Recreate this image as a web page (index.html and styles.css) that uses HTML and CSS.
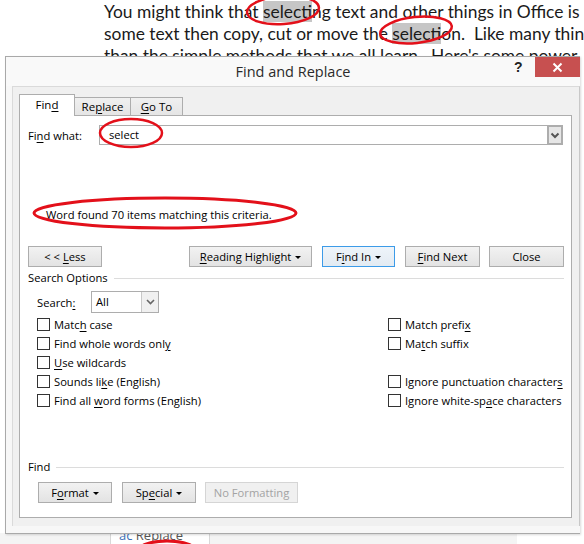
FILE: index.html
```html
<!DOCTYPE html>
<html>
<head>
<meta charset="utf-8">
<title>Find and Replace</title>
<link rel="stylesheet" href="styles.css">
</head>
<body>
<div class="doc">
  <div class="line">You might think that <span class="hl">select</span>ing text and other things in Office is simple</div>
  <div class="line">some text then copy, cut or move the <span class="hl">select</span>ion.&nbsp; Like many things</div>
  <div class="line">than the simple methods that we all learn.&nbsp; Here's some power</div>
  <div class="ribbon"><div class="ribbon-btn"><span class="ac">ac</span> Replace</div></div>
</div>

<div class="dialog">
  <div class="titlebar">
    <div class="title">Find and Replace</div>
    <div class="help">?</div>
    <div class="close"><svg width="11" height="11" viewBox="0 0 11 11"><path d="M1.5 1.5 L9.5 9.5 M9.5 1.5 L1.5 9.5" stroke="#fff" stroke-width="2" fill="none"/></svg></div>
  </div>
  <div class="client">
    <div class="tabs">
      <div class="tab active"><span>Fin<u>d</u></span></div>
      <div class="tab replace"><span>Re<u>p</u>lace</span></div>
      <div class="tab goto"><span><u>G</u>o To</span></div>
    </div>
    <div class="panel">
      <div class="findwhat">
        <div class="fw-label">Fi<u>n</u>d what:</div>
        <div class="combo">
          <span class="combo-value">select</span>
          <span class="combo-drop"><svg width="10" height="7" viewBox="0 0 10 7"><path d="M1.5 1.5 L5 5 L8.5 1.5" stroke="#555" stroke-width="2" fill="none"/></svg></span>
        </div>
      </div>

      <div class="message">Word found 70 items matching this criteria.</div>

      <div class="btnrow">
        <div class="btn less"><span>&lt; &lt; <u>L</u>ess</span></div>
        <div class="btn rh"><span><u>R</u>eading Highlight</span><span class="caret"></span></div>
        <div class="btn findin"><span>F<u>i</u>nd In</span><span class="caret"></span></div>
        <div class="btn findnext"><span><u>F</u>ind Next</span></div>
        <div class="btn close-btn"><span>Close</span></div>
      </div>

      <div class="group-title"><span>Search Options</span><span class="rule"></span></div>

      <div class="search-row">
        <div class="search-label">Search<u>:</u></div>
        <div class="select">
          <span class="select-value">All</span>
          <span class="select-drop"><svg width="9" height="6" viewBox="0 0 9 6"><path d="M1 1 L4.5 4.5 L8 1" stroke="#666" stroke-width="1.6" fill="none"/></svg></span>
        </div>
      </div>

      <div class="options">
        <div class="opt"><span class="cb"></span><span>Matc<u>h</u> case</span></div>
        <div class="opt"><span class="cb"></span><span>Match prefi<u>x</u></span></div>
        <div class="opt"><span class="cb"></span><span>Find whole words onl<u>y</u></span></div>
        <div class="opt"><span class="cb"></span><span>Ma<u>t</u>ch suffix</span></div>
        <div class="opt"><span class="cb"></span><span><u>U</u>se wildcards</span></div>
        <div class="opt empty"></div>
        <div class="opt"><span class="cb"></span><span>Sounds li<u>k</u>e (English)</span></div>
        <div class="opt"><span class="cb"></span><span>Ignore punctuation character<u>s</u></span></div>
        <div class="opt"><span class="cb"></span><span>Find all <u>w</u>ord forms (English)</span></div>
        <div class="opt"><span class="cb"></span><span>Ignore white-sp<u>a</u>ce characters</span></div>
      </div>

      <div class="group-title find-title"><span>Find</span><span class="rule"></span></div>

      <div class="btnrow bottom-row">
        <div class="btn format"><span>F<u>o</u>rmat</span><span class="caret"></span></div>
        <div class="btn special"><span>Sp<u>e</u>cial</span><span class="caret"></span></div>
        <div class="btn disabled"><span>No Formatting</span></div>
      </div>
    </div>
  </div>
</div>

<svg class="marks" width="584" height="544" viewBox="0 0 584 544">
  <g fill="none" stroke="#e3101a" stroke-linecap="round">
    <ellipse cx="283" cy="10" rx="36" ry="14" stroke-width="2.5" transform="rotate(-4 283 10)"/>
    <ellipse cx="416" cy="30" rx="36" ry="13" stroke-width="2.5" transform="rotate(-6 416 30)"/>
    <ellipse cx="131" cy="133" rx="31" ry="14" stroke-width="2.5"/>
    <ellipse cx="165" cy="213" rx="131" ry="15" stroke-width="3"/>
    <ellipse cx="167" cy="552" rx="30" ry="11" stroke-width="3"/>
  </g>
</svg>
</body>
</html>
```

FILE: styles.css
```css
* { box-sizing: border-box; }

html, body {
  margin: 0;
  padding: 0;
}

body {
  width: 584px;
  height: 544px;
  overflow: hidden;
  background: #ffffff;
  position: relative;
  font-family: "Open Sans", "Noto Sans", sans-serif;
}

u { text-decoration: underline; text-underline-offset: 2px; }

/* document behind */
.doc {
  height: 544px;
  display: flex;
  flex-direction: column;
  padding-top: 1px;
  font-family: Lato, "Open Sans", sans-serif;
  font-size: 17.4px;
  line-height: 22px;
  color: #1a1a1a;
}

.line {
  padding-left: 104px;
  white-space: nowrap;
}

.hl { background: #c6c6c6; }

.ribbon {
  margin-top: auto;
  height: 11px;
  width: 517px;
  background: #f4f4f4;
  padding-left: 110px;
}

.ribbon-btn {
  width: 100px;
  height: 11px;
  background: #fff;
  border-left: 1px solid #d8d8d8;
  border-right: 1px solid #d8d8d8;
  font-size: 13px;
  line-height: 4px;
  color: #555;
  padding-left: 8px;
  overflow: hidden;
  font-family: "Open Sans", sans-serif;
}

.ac { color: #3c6fb6; }

/* dialog window */
.dialog {
  position: absolute;
  left: 5px;
  top: 56px;
  width: 575px;
  height: 478px;
  background: #f7f7f7;
  border: 1px solid #a9a9a9;
  border-right: none;
  box-shadow: 1px 1px 2px rgba(0,0,0,0.15);
  display: flex;
  flex-direction: column;
  z-index: 2;
}

.titlebar {
  height: 29px;
  display: flex;
  align-items: flex-start;
  background: #f9f9f9;
}

.title {
  flex: 1;
  text-align: center;
  font-size: 14.5px;
  line-height: 30px;
  color: #2a2a2a;
  padding-left: 67px;
}

.help {
  width: 22px;
  font-weight: bold;
  font-size: 14px;
  line-height: 19px;
  color: #222;
  font-family: "Liberation Sans", sans-serif;
  text-align: left;
  padding-left: 1px;
  padding-top: 1px;
}

.close {
  width: 45px;
  height: 20px;
  background: #c75050;
  display: flex;
  align-items: center;
  justify-content: center;
}

.client {
  flex: 1;
  margin-left: 6px;
  margin-bottom: 7px;
  background: #f0f0f0;
  border-top: 1px solid #dadada;
  border-left: 1px solid #dadada;
  border-right: 1px solid #c8c8c8;
  padding: 7px 7px 8px 6px;
  display: flex;
  flex-direction: column;
  font-size: 11.2px;
  color: #000;
}

/* tabs */
.tabs {
  display: flex;
  align-items: flex-end;
  height: 21px;
  position: relative;
  z-index: 1;
}

.tab {
  height: 18px;
  border: 1px solid #adadad;
  border-bottom: none;
  background: linear-gradient(#f0f0f0, #e5e5e5);
  text-align: center;
  line-height: 17px;
  font-size: 11.5px;
}

.tab.active {
  width: 56px;
  height: 22px;
  margin-bottom: -1px;
  background: #fff;
  line-height: 20px;
}

.tab.replace { width: 57px; margin-left: -1px; }
.tab.goto { width: 53px; margin-left: -1px; }

.panel {
  flex: 1;
  background: #fff;
  border: 1px solid #adadad;
  padding: 0 7px 0 8px;
  display: flex;
  flex-direction: column;
}

/* find what */
.findwhat {
  margin-top: 9px;
  display: flex;
  align-items: center;
  height: 20px;
}

.fw-label { width: 71px; }

.combo {
  width: 464px;
  height: 20px;
  border: 1px solid #adadad;
  display: flex;
  align-items: stretch;
}

.combo-value {
  flex: 1;
  padding-left: 9px;
  line-height: 17px;
}

.combo-drop {
  width: 16px;
  margin: -1px -1px -1px 0;
  border: 2px solid #adadad;
  background: #e6e6e6;
  display: flex;
  align-items: center;
  justify-content: center;
}

.message {
  margin-top: 62px;
  line-height: 16px;
  padding-left: 18px;
}

/* buttons */
.btnrow {
  margin-top: 23px;
  display: flex;
  height: 21px;
}

.btn {
  height: 21px;
  border: 1px solid #adadad;
  background: linear-gradient(#f2f2f2, #e3e3e3);
  display: flex;
  align-items: center;
  justify-content: center;
  line-height: 17px;
  white-space: nowrap;
}

.caret {
  display: inline-block;
  width: 0;
  height: 0;
  border-left: 3px solid transparent;
  border-right: 3px solid transparent;
  border-top: 3px solid #000;
  margin-left: 4px;
  margin-top: 1px;
}

.less { width: 74px; }
.rh { width: 123px; margin-left: 87px; }
.findin {
  width: 73px;
  margin-left: 10px;
  border-color: #3c9be8;
  background: linear-gradient(#eef4fa, #e3ebf2);
}
.findnext { width: 75px; margin-left: 10px; }
.close-btn { width: 75px; margin-left: 9px; }

/* group titles */
.group-title {
  margin-top: 3px;
  display: flex;
  align-items: center;
  line-height: 16px;
  height: 16px;
}

.group-title .rule {
  flex: 1;
  height: 1px;
  background: #dcdcdc;
  margin-left: 6px;
}

.find-title { margin-top: 49px; }

/* search select */
.search-row {
  margin-top: 5px;
  display: flex;
  align-items: center;
  padding-left: 9px;
  height: 22px;
}

.search-label { width: 54px; }

.select {
  width: 68px;
  height: 22px;
  border: 1px solid #adadad;
  display: flex;
}

.select-value {
  flex: 1;
  padding-left: 4px;
  line-height: 19px;
}

.select-drop {
  width: 17px;
  border-left: 1px solid #c8c8c8;
  background: #f0f0f0;
  display: flex;
  align-items: center;
  justify-content: center;
}

/* options */
.options {
  margin-top: 2px;
  display: grid;
  grid-template-columns: 351px auto;
  grid-auto-rows: 19px;
  padding-left: 9px;
}

.opt {
  display: flex;
  align-items: center;
  white-space: nowrap;
}

.cb {
  width: 13px;
  height: 13px;
  border: 1px solid #333;
  background: #fff;
  margin-right: 4px;
  flex: none;
}

/* bottom */
.bottom-row {
  margin-top: 7px;
  padding-left: 10px;
}

.format { width: 74px; }
.special { width: 74px; margin-left: 10px; }
.disabled {
  width: 93px;
  margin-left: 9px;
  background: #f0f0f0;
  border-color: #d5d5d5;
  color: #a3a3a3;
}

/* annotations */
.marks {
  position: absolute;
  left: 0;
  top: 0;
  z-index: 5;
  pointer-events: none;
}
```
